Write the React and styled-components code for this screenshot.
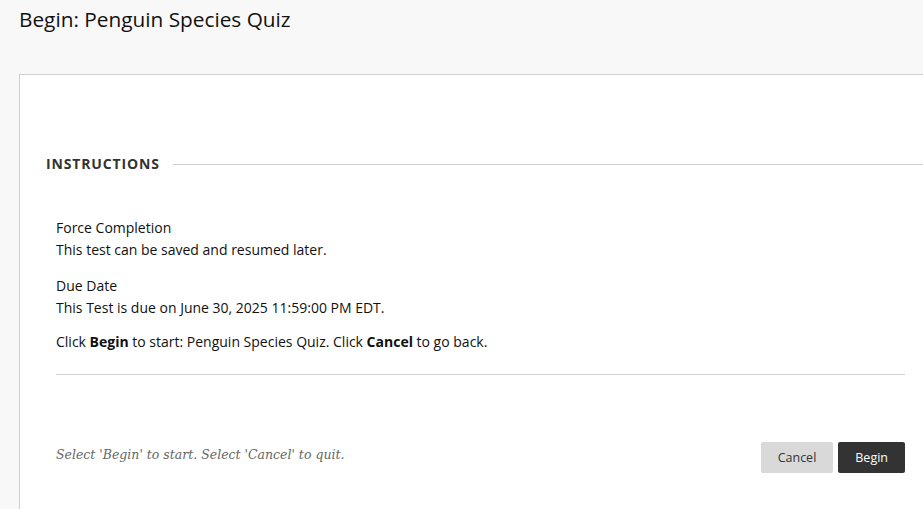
import React from "react";
import styled, { createGlobalStyle } from "styled-components";

const Global = createGlobalStyle`
  html, body { margin: 0; padding: 0; }
  body {
    background: #f8f8f8;
    font-family: "Open Sans", "Noto Sans", sans-serif;
    color: #111;
  }
`;

const Page = styled.div`
  min-height: 509px;
  background: #f8f8f8;
  display: flex;
  flex-direction: column;
`;

const Title = styled.h1`
  margin: 0;
  padding: 5px 19px 0;
  height: 74px;
  box-sizing: border-box;
  font-size: 20.8px;
  font-weight: 400;
  line-height: 28px;
  color: #111;
`;

const Panel = styled.section`
  margin-left: 19px;
  flex: 1;
  background: #fff;
  border-top: 1px solid #cfcfcf;
  border-left: 1px solid #cfcfcf;
  padding: 79px 18px 30px 26px;
`;

const SectionHead = styled.div`
  display: flex;
  align-items: center;
  gap: 13px;
`;

const HeadLabel = styled.h2`
  margin: 0;
  font-size: 14px;
  font-weight: 700;
  letter-spacing: 0.85px;
  line-height: 20px;
  color: #333;
  text-transform: uppercase;
`;

const HeadRule = styled.div`
  flex: 1;
  height: 1px;
  background: #cfcfcf;
  margin-right: -18px;
`;

const Body = styled.div`
  padding: 43px 0 0 10px;
  font-size: 14px;
  line-height: 22px;
  color: #111;
`;

const Field = styled.div`
  margin-bottom: ${(p) => p.$gap || 14}px;
`;

const Line = styled.div``;

const Divider = styled.hr`
  margin: 21px 0 0 10px;
  border: 0;
  border-top: 1px solid #cfcfcf;
`;

const Footer = styled.div`
  display: flex;
  align-items: center;
  justify-content: space-between;
  padding: 67px 0 0 10px;
`;

const Hint = styled.p`
  margin: 0 0 6px;
  font-family: "DejaVu Serif", "Liberation Serif", serif;
  font-style: italic;
  font-size: 12.5px;
  color: #666;
`;

const Buttons = styled.div`
  display: flex;
  gap: 5px;
`;

const Button = styled.button`
  height: 31px;
  padding: 0 17px;
  border: 0;
  border-radius: 2px;
  font-family: "Open Sans", "Noto Sans", sans-serif;
  font-size: 12.5px;
  background: ${(p) => (p.$primary ? "#333" : "#d9d9d9")};
  color: ${(p) => (p.$primary ? "#fff" : "#333")};
  cursor: pointer;
`;

export default function App() {
  return (
    <Page>
      <Global />
      <Title>Begin: Penguin Species Quiz</Title>
      <Panel>
        <SectionHead>
          <HeadLabel>Instructions</HeadLabel>
          <HeadRule />
        </SectionHead>
        <Body>
          <Field>
            <Line>Force Completion</Line>
            <Line>This test can be saved and resumed later.</Line>
          </Field>
          <Field $gap={12}>
            <Line>Due Date</Line>
            <Line>This Test is due on June 30, 2025 11:59:00 PM EDT.</Line>
          </Field>
          <Line>
            Click <b>Begin</b> to start: Penguin Species Quiz. Click <b>Cancel</b> to go back.
          </Line>
        </Body>
        <Divider />
        <Footer>
          <Hint>Select 'Begin' to start. Select 'Cancel' to quit.</Hint>
          <Buttons>
            <Button>Cancel</Button>
            <Button $primary>Begin</Button>
          </Buttons>
        </Footer>
      </Panel>
    </Page>
  );
}
